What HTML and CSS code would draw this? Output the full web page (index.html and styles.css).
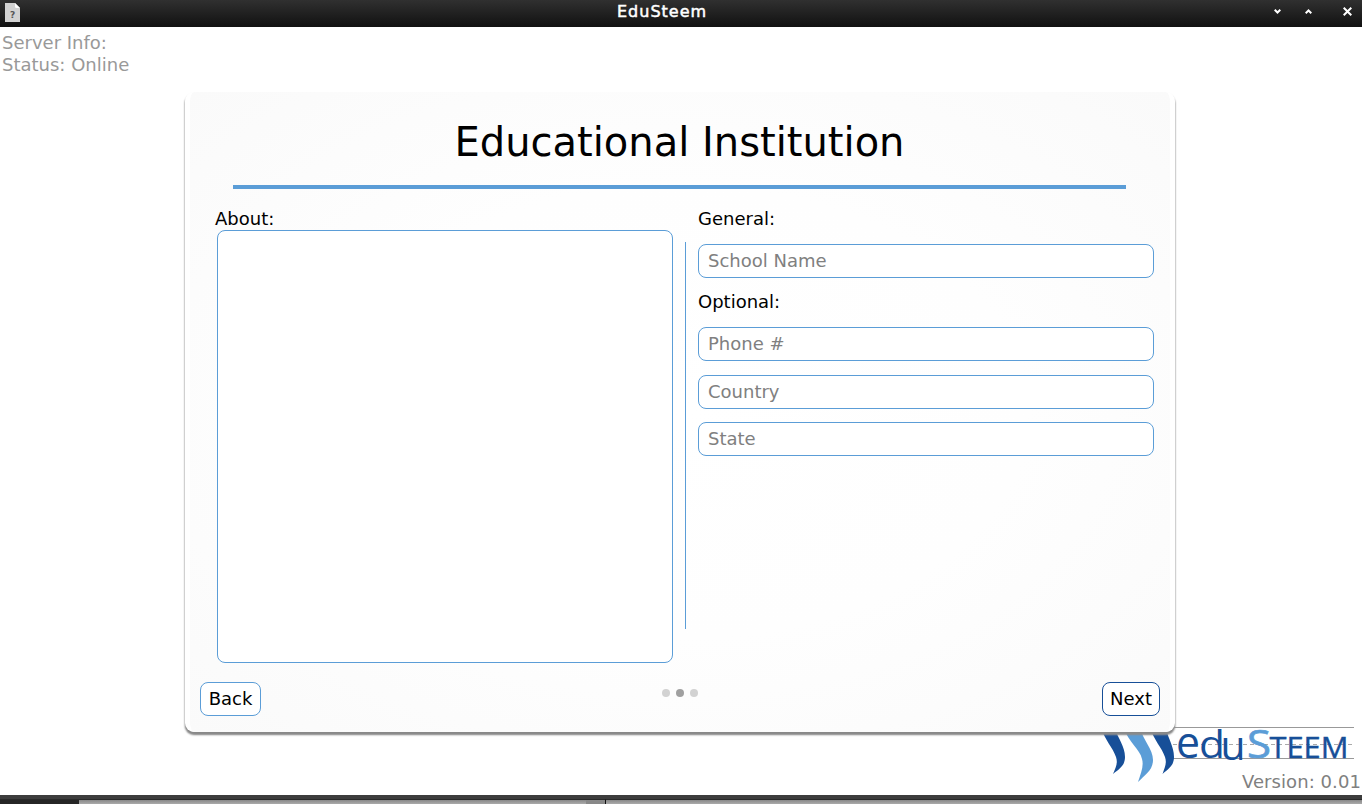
FILE: index.html
```html
<!DOCTYPE html>
<html lang="en">
<head>
<meta charset="utf-8">
<title>EduSteem</title>
<link rel="stylesheet" href="styles.css">
</head>
<body>
<div class="window">
  <header class="titlebar">
    <svg class="file-icon" width="15" height="19" viewBox="0 0 15 19"><path fill="#d2d2d2" d="M0 0h10l5 5v14H0z"/><path fill="#fff" d="M10 0l5 5h-3.500q-1.500 0-1.500-1.500z"/><text x="7.500" y="15" text-anchor="middle">?</text></svg>
    <h1 class="window-title">EduSteem</h1>
    <div class="controls">
      <svg width="7" height="5" viewBox="0 0 7 5"><path d="M.7.8L3.500 3.500 6.300.8"/></svg>
      <svg width="7" height="5" viewBox="0 0 7 5"><path d="M.7 4.200L3.500 1.500 6.300 4.200"/></svg>
      <svg width="9" height="9" viewBox="0 0 9 9"><path d="M.7.7l7.600 7.600M8.300.7L.7 8.300"/></svg>
    </div>
  </header>
  <main class="desktop">
    <div class="server">Server Info:<br>Status: Online</div>
    <section class="card">
      <h2 class="heading">Educational Institution</h2>
      <div class="rule"></div>
      <div class="columns">
        <div class="about">
          <label class="label" for="about">About:</label>
          <textarea id="about" class="area"></textarea>
        </div>
        <div class="divider"></div>
        <div class="fields">
          <div class="label">General:</div>
          <input class="field" placeholder="School Name">
          <div class="label optional">Optional:</div>
          <input class="field" placeholder="Phone #">
          <input class="field" placeholder="Country">
          <input class="field" placeholder="State">
        </div>
      </div>
      <footer class="actions">
        <button class="button">Back</button>
        <div class="dots"><i></i><i class="active"></i><i></i></div>
        <button class="button next">Next</button>
      </footer>
    </section>
    <svg class="logo" width="262" height="94" viewBox="1100 702 262 94">
      <path d="M1170 727.500H1354M1172 758.500H1354" stroke="#999"/>
      <path d="M1173 744.500H1352" stroke="#aaa" stroke-dasharray="4 3"/>
      <g fill="#174f98">
        <path d="M1101 728L1115 728C1118 739 1125 746 1125 757C1125 766 1119 769 1113 774C1116 767 1118 763 1116 757C1113 748 1105 740 1101 728z"/>
        <path d="M1150 728L1166 728C1168 739 1174 746 1174 757C1174 766 1168 769 1162.500 774C1165 767 1167 763 1165 757C1162 748 1154 740 1150 728z"/>
      </g>
      <path fill="#5b9dd7" d="M1124 728L1140 728C1143 740 1153 749 1153 760C1153 770 1145 775 1138 782C1141 773 1144 766 1142 759C1140 749 1128 742 1124 728z"/>
      <g class="word">
        <text x="1176" y="758" font-size="43" textLength="24" lengthAdjust="spacingAndGlyphs">e</text>
        <text x="1199" y="758" font-size="39" textLength="26" lengthAdjust="spacingAndGlyphs">d</text>
        <text x="1220.500" y="760" font-size="41" textLength="25" lengthAdjust="spacingAndGlyphs">u</text>
        <text class="light" x="1247" y="758" font-size="39" textLength="24" lengthAdjust="spacingAndGlyphs">S</text>
        <text class="caps" x="1269.500" y="758" font-size="29" textLength="79" lengthAdjust="spacingAndGlyphs">TEEM</text>
      </g>
    </svg>
    <div class="version">Version: 0.01</div>
  </main>
  <div class="taskbar"><div class="task dark"></div><div class="task wide"></div><div class="task small"></div><div class="task rest"></div></div>
</div>
</body>
</html>
```
FILE: styles.css
```css
* { box-sizing: border-box; }
body { margin: 0; background: #fff; font-family: "DejaVu Sans", sans-serif; font-size: 18px; color: #000; }
.window { height: 804px; display: flex; flex-direction: column; overflow: hidden; }
.titlebar { height: 27px; flex: none; display: grid; grid-template-columns: 612px 1fr auto; align-items: center; padding: 0 10px 3px 5px; background: linear-gradient(#303030, #111); }
.file-icon { display: block; }
.file-icon text { font: bold 9px "DejaVu Sans", sans-serif; fill: #555; }
.window-title { margin: 0; font: 400 16px/22px "DejaVu Sans", sans-serif; letter-spacing: 1px; -webkit-text-stroke: .5px #fff; color: #fff; }
.controls { display: flex; align-items: center; padding-bottom: 1px; }
.controls svg { fill: none; stroke: #fff; stroke-width: 2; margin-left: 24px; }
.controls svg:first-child { position: relative; left: -1px; }
.controls svg:nth-child(2) { margin-left: 23px; }
.controls svg:last-child { margin-left: 31px; }
.desktop { position: relative; flex: 1; background: #fff; }
.server { height: 65px; padding: 5px 2px; line-height: 22px; color: #999; }
.card { position: relative; z-index: 1; width: 990px; height: 640px; margin-left: 185px; display: flex; flex-direction: column; border: solid #fff; border-width: 0 5px; border-radius: 9px; background: radial-gradient(ellipse at center, #fff 0, #fefefe 50%, #fafafa 100%) padding-box, #fff; box-shadow: 0 3px 2px #888, 0 2px 2px #aaa; clip-path: inset(0 -6px -10px -6px); }
.heading { margin: 22px 1px 0 0; text-align: center; font-weight: 400; font-size: 40px; line-height: 56px; }
.rule { margin: 15px 44px 0 43px; height: 4px; background: #5b9dd7; }
.columns { display: flex; height: 475px; margin: 18px 16px 0 25px; }
.label { display: block; height: 23px; line-height: 23px; }
.area { display: block; width: 456px; height: 433px; margin: 0 0 0 2px; border: 1px solid #5b9dd7; border-radius: 8px; background: #fff; resize: none; }
.divider { width: 1px; height: 387px; margin: 35px 12px 0; background: #5b9dd7; }
.fields { width: 456px; }
.field { display: block; width: 456px; height: 34px; margin: 14px 0 0; padding: 0 9px 2px; border: 1px solid #5b9dd7; border-radius: 8px; background: #fff; font: inherit; }
.label + .field { margin-top: 14px; }
.field:last-child { margin-top: 13px; }
.field::placeholder { color: #808080; opacity: 1; }
.optional { margin-top: 12px; }
.actions { display: flex; justify-content: space-between; padding: 0 10px; }
.button { width: 61px; height: 34px; margin: 0; padding: 0 0 2px; border: 1px solid #5b9dd7; border-radius: 8px; background: #fff; font: inherit; color: #000; }
.button.next { width: 58px; border-color: #174f98; }
.dots { display: flex; gap: 6px; margin: 7px 3px 0 0; }
.dots i { width: 8px; height: 8px; border-radius: 50%; background: #d2d2d2; }
.dots .active { background: #a0a0a0; }
.logo { position: absolute; left: 1100px; top: 675px; }
.word text { font-family: "Open Sans", sans-serif; fill: #174f98; }
.word .light { fill: #5b9dd7; stroke: #5b9dd7; stroke-width: .7px; }
.word .caps { stroke: #174f98; stroke-width: .4px; }
.version { position: absolute; right: 1px; top: 744px; line-height: 22px; letter-spacing: .08px; color: #808080; }
.taskbar { display: flex; height: 9px; flex: none; border-top: 4px solid #3d3d3d; background: #999; }
.task { height: 5px; border-top: 1px solid #2a2a2a; background: linear-gradient(#888, #aaa); }
.dark { width: 79px; background: #252525; }
.wide { width: 507px; }
.small { width: 20px; background: #888; border-right: 1px solid #111; }
.rest { flex: 1; }
```
